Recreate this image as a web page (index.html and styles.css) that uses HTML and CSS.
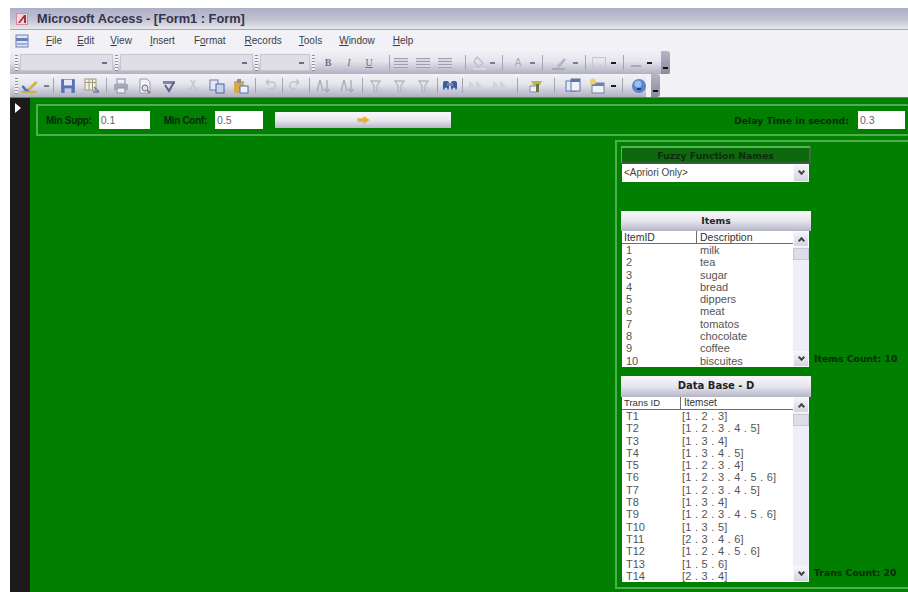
FILE: index.html
```html
<!DOCTYPE html>
<html lang="en">
<head>
<meta charset="utf-8">
<title>Microsoft Access - [Form1 : Form]</title>
<link rel="stylesheet" href="styles.css">
</head>
<body>
<svg class="sprites" aria-hidden="true">
  <symbol id="i-design" viewBox="0 0 16 16"><path d="M1 8l4 5 3-2" fill="none" stroke="#4a6fc0" stroke-width="2.5"/><path d="M6 11l8-8 2 2-8 8z" fill="#d8b040"/><path d="M0 14h15" stroke="#c9b040" stroke-width="2"/></symbol>
  <symbol id="i-save" viewBox="0 0 14 14"><rect x="1" y="1" width="12" height="12" fill="#5a70b8"/><rect x="3.5" y="1.5" width="7" height="5" fill="#e8e8f4"/><rect x="4" y="9" width="6" height="4" fill="#c4c8dc"/></symbol>
  <symbol id="i-table" viewBox="0 0 16 16"><rect x="1" y="1" width="11" height="11" fill="#f2efe0" stroke="#a09a80"/><path d="M1 4.500h11M5 1v11M8.500 1v11" stroke="#a09a80"/><path d="M10 9l5 5M9 14h6" stroke="#6f7ca8" stroke-width="1.600"/></symbol>
  <symbol id="i-print" viewBox="0 0 16 16"><rect x="4" y="1" width="8" height="5" fill="#f0f0f4" stroke="#8d8d9c"/><rect x="1" y="6" width="14" height="6" fill="#a6a8bc"/><rect x="4" y="10" width="8" height="5" fill="#ececf2" stroke="#8d8d9c"/></symbol>
  <symbol id="i-preview" viewBox="0 0 16 16"><path d="M3 1h7l3 3v11H3z" fill="#f4f4f8" stroke="#9a9aa8"/><circle cx="8" cy="10" r="3" fill="#d8e2f2" stroke="#5f6e98"/><path d="M10 12l3 3" stroke="#9a8050" stroke-width="2"/></symbol>
  <symbol id="i-spell" viewBox="0 0 16 16"><path d="M2 3h12v3H2z" fill="#7d86a4"/><path d="M4 7l4 6 5-9" fill="none" stroke="#5a6688" stroke-width="2"/></symbol>
  <symbol id="i-cut" viewBox="0 0 16 16"><path d="M6 2l4 8M10 2l-4 8" stroke="#c4c6d2" stroke-width="1.500"/><circle cx="5" cy="12" r="2" fill="none" stroke="#c4c6d2"/><circle cx="11" cy="12" r="2" fill="none" stroke="#c4c6d2"/></symbol>
  <symbol id="i-copy" viewBox="0 0 16 16"><rect x="1" y="2" width="8" height="10" fill="#e4e8f2" stroke="#6a7ca8"/><rect x="7" y="6" width="8" height="9" fill="#c8d2e8" stroke="#4a63a0"/></symbol>
  <symbol id="i-paste" viewBox="0 0 16 16"><rect x="1" y="3" width="10" height="12" fill="#d8a850"/><rect x="4" y="1" width="4" height="4" fill="#8d8d9c"/><rect x="7" y="8" width="8" height="7" fill="#f0f0f8" stroke="#5a6ea8"/></symbol>
  <symbol id="i-undo" viewBox="0 0 16 16"><path d="M4 4h6a3 3 0 0 1 0 7H7M4 4l3-2.500M4 4l3 3" fill="none" stroke="#c0c2d0" stroke-width="1.500"/></symbol>
  <symbol id="i-redo" viewBox="0 0 16 16"><path d="M12 4H6a3 3 0 0 0 0 7h3M12 4L9 1.500M12 4L9 7" fill="none" stroke="#c0c2d0" stroke-width="1.500"/></symbol>
  <symbol id="i-sort" viewBox="0 0 16 16"><path d="M4 2L1 13M4 2l3 11M11 2v12M8.500 11l2.500 3 2.500-3" fill="none" stroke="#a8aabc" stroke-width="1.300"/></symbol>
  <symbol id="i-filter" viewBox="0 0 16 16"><path d="M2 3h9L8 8v5l-3 1V8z" fill="none" stroke="#b4b6c6" stroke-width="1.300"/><path d="M10 9l4 5" stroke="#c0c2d0"/></symbol>
  <symbol id="i-find" viewBox="0 0 16 16"><rect x="1" y="3" width="6" height="9" rx="2" fill="#3f5c9c"/><rect x="9" y="3" width="6" height="9" rx="2" fill="#3f5c9c"/><rect x="5" y="5" width="6" height="3" fill="#6f88bc"/><circle cx="4" cy="11" r="1.500" fill="#c8d4ec"/><circle cx="12" cy="11" r="1.500" fill="#c8d4ec"/></symbol>
  <symbol id="i-goto" viewBox="0 0 16 16"><path d="M2 3l6 5-6 5zM9 3l6 5-6 5z" fill="#d0d2de"/></symbol>
  <symbol id="i-props" viewBox="0 0 16 16"><path d="M2 14V8h8v6z" fill="#eef0f6" stroke="#8a8c9c"/><path d="M3 3h11l-2 4H5z" fill="#b8b850"/><rect x="8" y="6" width="3" height="8" fill="#6a7a40"/></symbol>
  <symbol id="i-window" viewBox="0 0 16 16"><rect x="1" y="3" width="10" height="10" fill="#e4eaf6" stroke="#5a74ac"/><rect x="6" y="1" width="9" height="12" fill="#f2f4fa" stroke="#5a74ac"/><rect x="6" y="1" width="9" height="3" fill="#5a74ac"/></symbol>
  <symbol id="i-new" viewBox="0 0 16 16"><rect x="3" y="5" width="12" height="10" fill="#f0f2f8" stroke="#6f82ac"/><rect x="3" y="5" width="12" height="3" fill="#6f82ac"/><circle cx="4" cy="3.500" r="3" fill="#f0d060"/></symbol>
  <symbol id="i-help" viewBox="0 0 16 16"><circle cx="8" cy="8" r="7" fill="#5a84cc"/><circle cx="7" cy="6" r="3.500" fill="#9fbeee"/><path d="M6 11h4" stroke="#203c80" stroke-width="2"/></symbol>
  <symbol id="i-fill" viewBox="0 0 16 16"><path d="M5 2l6 6-4 4-5-5z" fill="none" stroke="#bcbecc" stroke-width="1.300"/><path d="M1 14h13" stroke="#d4d6e0" stroke-width="2"/></symbol>
  <symbol id="i-pen" viewBox="0 0 16 16"><path d="M5 11l7-8 2 2-7 8z" fill="#b4b6c4"/><path d="M0 14h13" stroke="#a8aaba" stroke-width="2"/></symbol>
</svg>

<div class="window">
  <header class="titlebar">
    <svg class="app-icon" viewBox="0 0 12 12"><rect width="12" height="12" fill="#d88a9c"/><rect x="1" y="1" width="10" height="10" fill="#f0d8de"/><path d="M2 10L8 2h2v8H8V5l-4 5z" fill="#a82c48"/></svg>
    <span class="title-text">Microsoft Access - [Form1 : Form]</span>
  </header>

  <nav class="menubar">
    <svg class="menu-icon" viewBox="0 0 14 14"><rect x="1" y="1" width="12" height="12" fill="#dfe6f4" stroke="#6a82b8"/><rect x="1" y="4" width="12" height="3" fill="#6a82b8"/><rect x="1" y="9" width="12" height="2" fill="#9fb0d4"/></svg>
    <span class="menu-item m-file"><u>F</u>ile</span>
    <span class="menu-item m-edit"><u>E</u>dit</span>
    <span class="menu-item m-view"><u>V</u>iew</span>
    <span class="menu-item m-insert"><u>I</u>nsert</span>
    <span class="menu-item m-format">F<u>o</u>rmat</span>
    <span class="menu-item m-records"><u>R</u>ecords</span>
    <span class="menu-item m-tools"><u>T</u>ools</span>
    <span class="menu-item m-window"><u>W</u>indow</span>
    <span class="menu-item m-help"><u>H</u>elp</span>
  </nav>

  <div class="toolbar toolbar-format">
    <span class="grip"></span>
    <span class="tool-combo c-object"><i class="arrow"></i></span>
    <span class="grip"></span>
    <span class="tool-combo c-font"><i class="arrow"></i></span>
    <span class="grip"></span>
    <span class="tool-combo c-size"><i class="arrow"></i></span>
    <span class="grip"></span>
    <span class="glyph g-bold">B</span>
    <span class="glyph g-italic">I</span>
    <span class="glyph g-under">U</span>
    <span class="sep sep-format"></span>
    <span class="align"></span><span class="align"></span><span class="align"></span>
    <span class="sep"></span>
    <svg class="tool f1 f-fill"><use href="#i-fill"/></svg><i class="drop"></i>
    <span class="sep"></span>
    <span class="glyph g-color">A</span><i class="drop"></i>
    <span class="sep sep-pen"></span>
    <svg class="tool f1"><use href="#i-pen"/></svg><i class="drop"></i>
    <span class="sep"></span>
    <span class="box-tool"></span><i class="drop dark"></i>
    <span class="sep"></span>
    <span class="line-tool"></span><i class="drop dark"></i>
    <span class="end-grip"></span>
  </div>

  <div class="toolbar toolbar-form">
    <span class="grip dotted"></span>
    <svg class="tool wide"><use href="#i-design"/></svg><i class="drop"></i>
    <span class="sep"></span>
    <svg class="tool"><use href="#i-save"/></svg>
    <svg class="tool"><use href="#i-table"/></svg>
    <span class="sep"></span>
    <svg class="tool"><use href="#i-print"/></svg>
    <svg class="tool"><use href="#i-preview"/></svg>
    <svg class="tool"><use href="#i-spell"/></svg>
    <svg class="tool"><use href="#i-cut"/></svg>
    <svg class="tool"><use href="#i-copy"/></svg>
    <svg class="tool"><use href="#i-paste"/></svg>
    <span class="sep"></span>
    <svg class="tool"><use href="#i-undo"/></svg>
    <span class="sep sep-tight"></span>
    <svg class="tool"><use href="#i-redo"/></svg>
    <span class="sep"></span>
    <svg class="tool"><use href="#i-sort"/></svg>
    <svg class="tool"><use href="#i-sort"/></svg>
    <span class="sep"></span>
    <svg class="tool"><use href="#i-filter"/></svg>
    <svg class="tool"><use href="#i-filter"/></svg>
    <svg class="tool"><use href="#i-filter"/></svg>
    <span class="sep sep-tight"></span>
    <svg class="tool"><use href="#i-find"/></svg>
    <span class="sep sep-tight"></span>
    <svg class="tool"><use href="#i-goto"/></svg>
    <svg class="tool"><use href="#i-goto"/></svg>
    <span class="sep sep-wide"></span>
    <svg class="tool"><use href="#i-props"/></svg>
    <span class="sep sep-wide"></span>
    <svg class="tool"><use href="#i-window"/></svg>
    <svg class="tool"><use href="#i-new"/></svg><i class="drop dark"></i>
    <span class="sep sep-mid"></span>
    <svg class="tool"><use href="#i-help"/></svg>
    <span class="end-grip"></span>
  </div>

  <main class="form">
    <aside class="selector"><span class="pointer"></span></aside>
    <div class="detail">
      <section class="params">
        <label class="field-label l-supp">Min Supp:</label>
        <span class="input i-supp">0.1</span>
        <label class="field-label l-conf">Min Conf:</label>
        <span class="input i-conf">0.5</span>
        <button class="run" type="button"><svg class="run-arrow" viewBox="0 0 14 9"><path d="M0 2.500h7V0l7 4.500L7 9V6.500H0z" fill="#e8b040"/></svg></button>
        <label class="field-label l-delay">Delay Time in second:</label>
        <span class="input i-delay">0.3</span>
      </section>

      <section class="data-panel">
        <div class="stack">
          <h2 class="caption dark">Fuzzy Function Names</h2>
          <div class="combo">
            <span class="combo-text">&lt;Apriori Only&gt;</span>
            <span class="scroll-btn"><i class="chev"></i></span>
          </div>

          <h2 class="caption light items-caption">Items</h2>
          <div class="list-row">
            <div class="list items-list">
              <div class="list-body">
                <div class="row head"><span>ItemID</span><span>Description</span></div>
                <div class="row"><span>1</span><span>milk</span></div>
                <div class="row"><span>2</span><span>tea</span></div>
                <div class="row"><span>3</span><span>sugar</span></div>
                <div class="row"><span>4</span><span>bread</span></div>
                <div class="row"><span>5</span><span>dippers</span></div>
                <div class="row"><span>6</span><span>meat</span></div>
                <div class="row"><span>7</span><span>tomatos</span></div>
                <div class="row"><span>8</span><span>chocolate</span></div>
                <div class="row"><span>9</span><span>coffee</span></div>
                <div class="row"><span>10</span><span>biscuites</span></div>
              </div>
              <div class="scrollbar">
                <span class="scroll-btn"><i class="chev up"></i></span>
                <span class="thumb"></span>
                <span class="scroll-btn end"><i class="chev"></i></span>
              </div>
            </div>
            <span class="count items-count">Items Count: 10</span>
          </div>

          <h2 class="caption light db-caption">Data Base - D</h2>
          <div class="list-row">
            <div class="list db-list">
              <div class="list-body">
                <div class="row head"><span>Trans ID</span><span>Itemset</span></div>
                <div class="row"><span>T1</span><span>[1 . 2 . 3]</span></div>
                <div class="row"><span>T2</span><span>[1 . 2 . 3 . 4 . 5]</span></div>
                <div class="row"><span>T3</span><span>[1 . 3 . 4]</span></div>
                <div class="row"><span>T4</span><span>[1 . 3 . 4 . 5]</span></div>
                <div class="row"><span>T5</span><span>[1 . 2 . 3 . 4]</span></div>
                <div class="row"><span>T6</span><span>[1 . 2 . 3 . 4 . 5 . 6]</span></div>
                <div class="row"><span>T7</span><span>[1 . 2 . 3 . 4 . 5]</span></div>
                <div class="row"><span>T8</span><span>[1 . 3 . 4]</span></div>
                <div class="row"><span>T9</span><span>[1 . 2 . 3 . 4 . 5 . 6]</span></div>
                <div class="row"><span>T10</span><span>[1 . 3 . 5]</span></div>
                <div class="row"><span>T11</span><span>[2 . 3 . 4 . 6]</span></div>
                <div class="row"><span>T12</span><span>[1 . 2 . 4 . 5 . 6]</span></div>
                <div class="row"><span>T13</span><span>[1 . 5 . 6]</span></div>
                <div class="row"><span>T14</span><span>[2 . 3 . 4]</span></div>
              </div>
              <div class="scrollbar">
                <span class="scroll-btn"><i class="chev up"></i></span>
                <span class="thumb"></span>
                <span class="scroll-btn end"><i class="chev"></i></span>
              </div>
            </div>
            <span class="count trans-count">Trans Count: 20</span>
          </div>
        </div>
      </section>
    </div>
  </main>
</div>
</body>
</html>
```

FILE: styles.css
```css
* { box-sizing: border-box; }

html, body {
  margin: 0;
  height: 592px;
  overflow: hidden;
  background: #fff;
}

body {
  padding: 8px 0 0 10px;
  font-family: "Liberation Sans", Arial, sans-serif;
}

.sprites { display: none; }

.window {
  display: flex;
  flex-direction: column;
  height: 584px;
  background: #f1f1f6;
}

/* Title bar */
.titlebar {
  display: flex;
  align-items: center;
  height: 22px;
  padding-left: 6px;
  background: linear-gradient(#aeaec8, #c2c2d4 55%, #e6e6ec);
  border-bottom: 1px solid #a8a8b0;
}
.app-icon { width: 12px; height: 12px; }
.title-text {
  margin-left: 9px;
  font-size: 12.8px;
  font-weight: 700;
  color: #34344a;
}

/* Menu bar */
.menubar {
  display: flex;
  align-items: center;
  height: 21px;
  padding-left: 5px;
  font-size: 10px;
  color: #3c3c48;
}
.menu-icon { width: 14px; height: 14px; }
.m-file { margin-left: 17px; }
.m-edit { margin-left: 15px; }
.m-view { margin-left: 16px; }
.m-insert { margin-left: 18px; }
.m-format { margin-left: 19px; }
.m-records { margin-left: 19px; }
.m-tools { margin-left: 17px; }
.m-window { margin-left: 17px; }
.m-help { margin-left: 18px; }

/* Toolbars */
.toolbar {
  display: flex;
  align-items: center;
  height: 23px;
  padding-left: 5px;
  background: linear-gradient(#f1f1f6, #e4e4ec 45%, #b0b0c2);
}
.toolbar-format { width: 660px; }
.toolbar-form { width: 636px; }

.grip {
  flex: none;
  width: 3px;
  height: 16px;
  margin: 0 2px 0 0;
  background: repeating-linear-gradient(#8d8d9c 0 1px, #f4f4f8 1px 3px);
}
.grip.dotted { margin-right: 3px; }

.tool-combo {
  display: flex;
  align-items: center;
  justify-content: flex-end;
  height: 17px;
  margin-right: 2px;
  padding-right: 5px;
  background: #dedee6;
  border: 1px solid #c6c6d0;
}
.c-object { width: 93px; }
.c-font { width: 133px; }
.c-size { width: 50px; }
.arrow {
  width: 5px;
  height: 2px;
  background: #70707c;
}

.glyph {
  flex: none;
  font-size: 10px;
  font-family: "Liberation Serif", serif;
  color: #70707c;
  text-align: center;
}
.g-bold { width: 20px; margin-left: 1px; font-weight: 700; }
.g-italic { width: 22px; font-style: italic; }
.g-under { width: 18px; text-decoration: underline; }
.g-color { width: 20px; font-family: "Liberation Sans", sans-serif; color: #a8a8b8; }

.sep {
  flex: none;
  width: 1px;
  height: 15px;
  margin: 0 2px;
  background: #a4a4b4;
}
.sep-tight { margin: 0; }
.sep-mid { margin: 0 4px; }
.sep-wide { margin: 0 6px; }
.toolbar-format .sep { margin: 0 5px; }
.toolbar-format .sep-format { margin: 0 4px 0 11px; }
.toolbar-format .sep-pen { margin: 0 8px 0 5px; }

.align {
  flex: none;
  width: 14px;
  height: 10px;
  margin-right: 8px;
  background: repeating-linear-gradient(#a0a0b0 0 1px, #d8d8e2 1px 3px);
}

.tool {
  flex: none;
  width: 16px;
  height: 16px;
  margin: 0 4px;
}
.tool.wide { width: 17px; margin: 0 4px 0 0; }
.tool.f1 { margin: 0 3px 0 1px; }
.tool.f-fill { margin-right: 0; }

.drop {
  flex: none;
  width: 5px;
  height: 2px;
  margin: 0 2px;
  background: #7c7c8a;
}
.drop.dark { background: #1c1c24; }

.box-tool {
  flex: none;
  width: 14px;
  height: 11px;
  margin: 0 3px 0 1px;
  border: 1px solid #c6c6d2;
}
.line-tool {
  flex: none;
  width: 10px;
  height: 2px;
  margin: 6px 4px 0 2px;
  background: #a8a8b6;
}

.end-grip {
  position: relative;
  flex: none;
  width: 9px;
  height: 100%;
  margin-left: auto;
  background: linear-gradient(#b4b4c4, #8a8a9c);
  border-radius: 0 3px 3px 0;
}
.end-grip::after {
  content: "";
  position: absolute;
  left: 2px;
  bottom: 5px;
  width: 5px;
  height: 2px;
  background: #111;
}

/* Form area */
.form {
  display: flex;
  flex: 1;
  min-height: 0;
  background: #007f00;
  border-top: 1px solid #5c8c5c;
}

.selector {
  flex: none;
  width: 20px;
  padding: 5px 0 0 5px;
  background: #1c1a1c;
}
.pointer {
  display: block;
  width: 0;
  height: 0;
  border-left: 6px solid #fff;
  border-top: 5px solid transparent;
  border-bottom: 5px solid transparent;
}

.detail {
  flex: 1;
  min-width: 0;
  padding-top: 6px;
  padding-left: 6px;
}

.params {
  display: flex;
  align-items: center;
  height: 32px;
  padding-left: 8px;
  border: 2px solid #4cb04c;
  border-right: 0;
}

.field-label {
  font-size: 10px;
  font-weight: 700;
  letter-spacing: -0.3px;
  color: #0a2a0a;
  white-space: nowrap;
}
.l-conf { margin-left: 14px; }
.l-delay {
  margin-left: auto;
  font-family: "DejaVu Sans", sans-serif;
  font-size: 9.3px;
  letter-spacing: 0;
}

.input {
  flex: none;
  height: 18px;
  padding: 0 2px;
  font-size: 10.500px;
  line-height: 18px;
  color: #666;
  background: #fff;
}
.i-supp { width: 51px; margin-left: 7px; }
.i-conf { width: 48px; margin-left: 8px; }
.i-delay { width: 47px; margin: 0 3px 0 9px; }

.run {
  display: flex;
  align-items: center;
  justify-content: center;
  flex: none;
  width: 176px;
  height: 16px;
  margin: 0 0 0 12px;
  padding: 0;
  border: 0;
  background: linear-gradient(#f8f8fc, #e8e8f0 50%, #b8b8c8);
}
.run-arrow { width: 13px; height: 8px; }

.data-panel {
  height: 449px;
  margin: 4px 0 0 579px;
  padding: 4px 0 0 4px;
  border: 2px solid #4cb04c;
  border-right: 0;
}

.stack {
  display: flex;
  flex-direction: column;
  width: 300px;
}

.caption {
  width: 190px;
  margin: 0;
  font-family: "DejaVu Sans", sans-serif;
  font-weight: 700;
  font-size: 9.3px;
  text-align: center;
  color: #1c2428;
}
.caption.dark {
  height: 18px;
  line-height: 15px;
  color: #0c2c0c;
  background: #0c6a0c;
  border-top: 2px solid #58b458;
  border-left: 1px solid #58b458;
  border-right: 2px solid #3c6c3c;
  border-bottom: 2px solid #3c5c3c;
}
.caption.light {
  line-height: 20px;
  background: linear-gradient(#f6f6fa, #e6e6ee 50%, #b4b4c6);
}
.items-caption { height: 20px; margin-top: 29px; }
.db-caption { height: 21px; margin-top: 9px; font-size: 10px; }

.combo {
  display: flex;
  align-items: stretch;
  justify-content: space-between;
  width: 187px;
  height: 18px;
  margin-left: 1px;
  background: #fff;
}
.combo-text {
  padding-left: 2px;
  font-size: 10px;
  line-height: 17px;
  color: #444;
}

.list-row {
  display: flex;
  align-items: flex-end;
}
.list {
  display: flex;
  flex: none;
  width: 187px;
  margin-left: 1px;
  background: #fff;
}
.items-list { height: 136px; }
.db-list { height: 185px; }

.list-body {
  flex: 1;
  min-width: 0;
  font-size: 11px;
  color: #555;
}
.row {
  display: grid;
  height: 12.3px;
  line-height: 12.3px;
  white-space: nowrap;
}
.row span { padding-left: 4px; }
.row span + span { padding-left: 4px; }
.items-list .row { grid-template-columns: 74px 1fr; }
.db-list .row { grid-template-columns: 58px 1fr; }
.db-list .row span + span { padding-left: 2px; letter-spacing: 0.25px; }
.db-list .row.head span { letter-spacing: 0; font-size: 10px; }
.db-list .row.head span:first-child { font-size: 9.5px; }

.row.head {
  height: 13px;
  line-height: 12px;
  font-size: 10.5px;
  border-bottom: 1px solid #6c6c78;
  color: #333;
}
.row.head span:first-child { padding-left: 2px; }
.row.head span + span { padding-left: 3px; border-left: 1px solid #6c6c78; }

.scrollbar {
  display: flex;
  flex-direction: column;
  flex: none;
  width: 16px;
  background: #eeeef8;
}
.scroll-btn {
  display: flex;
  align-items: center;
  justify-content: center;
  flex: none;
  width: 16px;
  height: 16px;
  background: linear-gradient(#f4f4fa, #d4d4e2);
  border: 1px solid #f8f8fc;
}
.scroll-btn.end { margin-top: auto; }
.combo .scroll-btn { height: 18px; }

.thumb {
  width: 16px;
  height: 12px;
  margin-top: 1px;
  background: #dcdcea;
  border: 1px solid #c8c8d8;
}

.chev {
  width: 5px;
  height: 5px;
  margin-top: -3px;
  border-right: 2px solid #444;
  border-bottom: 2px solid #444;
  transform: rotate(45deg);
}
.chev.up {
  margin-top: 3px;
  transform: rotate(225deg);
}

.count {
  margin-left: 5px;
  font-family: "DejaVu Sans", sans-serif;
  font-size: 9.3px;
  font-weight: 700;
  color: #0a2a0a;
  white-space: nowrap;
}
.items-count { padding-bottom: 3px; }
.trans-count { padding-bottom: 4px; }
```
